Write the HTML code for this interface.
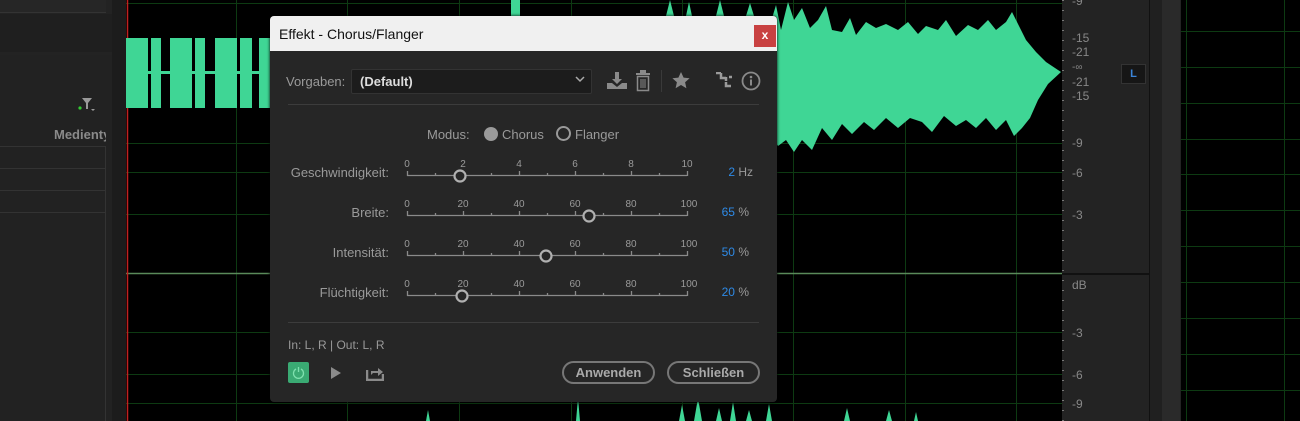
<!DOCTYPE html>
<html><head><meta charset="utf-8"><style>
*{margin:0;padding:0;box-sizing:border-box}
body{width:1300px;height:421px;overflow:hidden;background:#232323;font-family:"Liberation Sans",sans-serif;position:relative}
.a{position:absolute}
.t{color:#9a9a9a;font-size:13px}
</style></head><body>
<div class="a" style="left:0;top:0;width:106px;height:13px;background:#262626;border-bottom:1px solid #333"></div>
<div class="a" style="left:0;top:14px;width:112px;height:38px;background:#1f1f1f"></div>
<div class="a" style="left:0;top:55px;width:112px;height:366px;background:#222"></div>
<div class="a" style="left:0;top:146px;width:106px;height:1px;background:#333"></div>
<div class="a" style="left:0;top:168px;width:106px;height:1px;background:#333"></div>
<div class="a" style="left:0;top:190px;width:106px;height:1px;background:#333"></div>
<div class="a" style="left:0;top:212px;width:106px;height:1px;background:#333"></div>
<div class="a" style="left:105px;top:146px;width:1px;height:275px;background:#333"></div>
<div class="a" style="left:112px;top:0;width:14px;height:421px;background:#1c1c1c"></div>
<svg class="a" style="left:78px;top:96px" width="20" height="16"><circle cx="2" cy="12" r="1.6" fill="#3c3"/><path d="M4 2h10l-4 5v6h-2v-6z" fill="#999"/><path d="M13 13h4l-2 2z" fill="#999"/></svg>
<div class="a t" style="left:54px;top:127px;font-weight:bold;font-size:13px;color:#8a8a8a;width:52px;overflow:hidden;white-space:nowrap">Medientyp</div>
<svg class="a" style="left:126px;top:0" width="936" height="421">
<rect width="936" height="421" fill="#000"/>
<g stroke="#0d3a12" stroke-width="1">
<line x1="0" y1="3.5" x2="936" y2="3.5"/><line x1="0" y1="143.5" x2="936" y2="143.5"/><line x1="0" y1="172.5" x2="936" y2="172.5"/><line x1="0" y1="214.5" x2="936" y2="214.5"/><line x1="0" y1="332.5" x2="936" y2="332.5"/><line x1="0" y1="374.5" x2="936" y2="374.5"/><line x1="0" y1="403.5" x2="936" y2="403.5"/>
<line x1="110.5" y1="0" x2="110.5" y2="421"/><line x1="221.5" y1="0" x2="221.5" y2="421"/><line x1="333.5" y1="0" x2="333.5" y2="421"/><line x1="445.5" y1="0" x2="445.5" y2="421"/><line x1="556.5" y1="0" x2="556.5" y2="421"/><line x1="667.5" y1="0" x2="667.5" y2="421"/><line x1="779.5" y1="0" x2="779.5" y2="421"/><line x1="890.5" y1="0" x2="890.5" y2="421"/>
</g>
<line x1="0" y1="273.5" x2="936" y2="273.5" stroke="#5a8a5a" stroke-width="1.5"/>
<line x1="1.5" y1="0" x2="1.5" y2="421" stroke="#c02020" stroke-width="1.5"/>
<g fill="#3fd695">
<rect x="0" y="38" width="22" height="70"/><rect x="25" y="38" width="10" height="70"/><rect x="44" y="38" width="22" height="70"/><rect x="69" y="38" width="10" height="70"/><rect x="89" y="38" width="22" height="70"/><rect x="114" y="38" width="12" height="70"/><rect x="133" y="38" width="12" height="70"/>
<rect x="20" y="71" width="30" height="3"/><rect x="65" y="71" width="30" height="3"/><rect x="110" y="71" width="30" height="3"/>
<path d="M644 25 L650 5 L655 30 L662 2 L668 20 L676 8 L684 28 L692 20 L700 6 L706 30 L716 32 L724 18 L730 35 L740 22 L750 28 L760 24 L772 30 L782 22 L792 34 L800 26 L812 30 L820 20 L830 36 L842 25 L852 30 L862 20 L870 30 L880 22 L886 12 L892 24 L900 40 L910 52 L920 62 L935 72 L922 84 L912 100 L904 118 L896 128 L888 136 L880 120 L870 130 L860 118 L850 128 L840 120 L830 126 L818 116 L806 132 L796 122 L784 118 L772 128 L760 118 L748 130 L738 122 L726 134 L716 124 L706 140 L696 128 L686 150 L676 140 L668 152 L660 140 L652 146 L645 136 Z"/>
<path d="M540 16 L544 0 L548 16 L560 16 L563 2 L566 16 L590 16 L594 0 L598 16 L620 16 L624 3 L628 16 Z"/>
<rect x="385" y="0" width="9" height="16"/>
<path d="M553 421 L556 405 L559 421 L568 421 L572 398 L576 421 L590 421 L593 408 L596 421 L604 421 L607 402 L610 421 L620 421 L623 410 L626 421 L640 421 L643 404 L646 421 Z"/>
<path d="M718 421 L721 408 L724 421 L760 421 L763 410 L766 421 L788 421 L790 412 L792 421 Z"/>
<path d="M300 421 L302 410 L304 421 Z"/><path d="M450 421 L452 398 L454 421 Z"/>
</g>
</svg>
<div class="a" style="left:1062px;top:0;width:88px;height:421px;background:#232323"></div>
<div class="a" style="left:1062px;top:273px;width:88px;height:2px;background:#111"></div>
<div class="a" style="left:1062px;top:0;width:2px;height:421px;background:repeating-linear-gradient(#777 0 1px,transparent 1px 10px)"></div>
<div class="a" style="font-size:12px;color:#888;left:1072px;top:-6px;line-height:14px">-9</div>
<div class="a" style="font-size:12px;color:#888;left:1072px;top:31px;line-height:14px">-15<br>-21<br><span style="font-size:10px">-∞</span><br>-21<br>-15</div>
<div class="a" style="font-size:12px;color:#888;left:1072px;top:136px">-9</div>
<div class="a" style="font-size:12px;color:#888;left:1072px;top:166px">-6</div>
<div class="a" style="font-size:12px;color:#888;left:1072px;top:208px">-3</div>
<div class="a" style="font-size:12px;color:#888;left:1072px;top:278px">dB</div>
<div class="a" style="font-size:12px;color:#888;left:1072px;top:326px">-3</div>
<div class="a" style="font-size:12px;color:#888;left:1072px;top:368px">-6</div>
<div class="a" style="font-size:12px;color:#888;left:1072px;top:397px">-9</div>
<div class="a" style="left:1121px;top:64px;width:25px;height:20px;background:#161616;border:1px solid #333;color:#3a84d8;font-size:11px;font-weight:bold;text-align:center;line-height:18px">L</div>
<div class="a" style="left:1149px;top:0;width:1px;height:421px;background:#111"></div>
<div class="a" style="left:1150px;top:0;width:12px;height:421px;background:#202020"></div>
<div class="a" style="left:1162px;top:0;width:18px;height:421px;background:#2a2a2a"></div>
<svg class="a" style="left:1181px;top:0" width="119" height="421">
<rect width="119" height="421" fill="#000"/>
<g stroke="#0d3a12">
<line x1="5.5" y1="0" x2="5.5" y2="421"/><line x1="103.5" y1="0" x2="103.5" y2="421"/>
<line x1="0" y1="31.5" x2="119" y2="31.5"/><line x1="0" y1="67.5" x2="119" y2="67.5"/><line x1="0" y1="103.5" x2="119" y2="103.5"/><line x1="0" y1="139.5" x2="119" y2="139.5"/><line x1="0" y1="174.5" x2="119" y2="174.5"/><line x1="0" y1="210.5" x2="119" y2="210.5"/><line x1="0" y1="246.5" x2="119" y2="246.5"/><line x1="0" y1="282.5" x2="119" y2="282.5"/><line x1="0" y1="318.5" x2="119" y2="318.5"/><line x1="0" y1="354.5" x2="119" y2="354.5"/><line x1="0" y1="390.5" x2="119" y2="390.5"/>
</g></svg>
<div class="a" style="left:270px;top:16px;width:507px;height:386px;background:#262626;border-radius:4px;box-shadow:0 0 3px #000;overflow:hidden">
 <div class="a" style="left:0;top:0;width:507px;height:35px;background:#f0f0f0"></div>
 <div class="a" style="left:9px;top:10px;font-size:14px;color:#111">Effekt - Chorus/Flanger</div>
 <div class="a" style="left:484px;top:9px;width:22px;height:22px;background:#c84141;color:#fff;font-size:12px;font-weight:bold;text-align:center;line-height:21px">x</div>
 <div class="a t" style="left:16px;top:58px">Vorgaben:</div>
 <div class="a" style="left:81px;top:53px;width:241px;height:25px;background:#1c1c1c;border:1px solid #333;border-radius:2px;color:#ddd;font-size:13px;font-weight:bold;padding:4px 8px">(Default)</div>
 <svg class="a" style="left:305px;top:60px" width="10" height="8"><path d="M1 1l4 4 4-4" stroke="#aaa" stroke-width="1.5" fill="none"/></svg>
 <svg class="a" style="left:336px;top:55px" width="22" height="20"><path d="M9 1h4v7h3l-5 5-5-5h3z" fill="#8a8a8a"/><path d="M1 12h5l5 4 5-4h5v6H1z" fill="#8a8a8a"/></svg>
 <svg class="a" style="left:365px;top:54px" width="16" height="22"><rect x="1" y="3" width="14" height="2" fill="#8a8a8a"/><rect x="5" y="0" width="6" height="3" fill="#8a8a8a"/><rect x="2.5" y="6.5" width="11" height="14" fill="none" stroke="#8a8a8a" stroke-width="1.5"/><path d="M6 9v9M8 9v9M10 9v9" stroke="#8a8a8a"/></svg>
 <div class="a" style="left:391px;top:54px;width:1px;height:22px;background:#3a3a3a"></div>
 <svg class="a" style="left:402px;top:56px" width="18" height="17"><path d="M9 0l2.6 5.6 6 .6-4.5 4 1.3 6L9 13l-5.4 3.2 1.3-6L.4 6.2l6-.6z" fill="#8a8a8a"/></svg>
 <svg class="a" style="left:446px;top:56px" width="16" height="17"><path d="M0 1h5M5 1v5h5M10 5v4M10 10v4h5M13 5h3" stroke="#9a9a9a" stroke-width="2.5" fill="none"/></svg>
 <svg class="a" style="left:471px;top:55px" width="20" height="20"><circle cx="10" cy="10" r="8.5" stroke="#8a8a8a" stroke-width="1.8" fill="none"/><circle cx="10" cy="6" r="1.3" fill="#8a8a8a"/><rect x="9" y="8.5" width="2" height="6" fill="#8a8a8a"/></svg>
 <div class="a" style="left:18px;top:88px;width:471px;height:1px;background:#3c3c3c"></div>
 <div class="a t" style="left:157px;top:111px">Modus:</div>
 <div class="a" style="left:214px;top:111px;width:14px;height:14px;border-radius:50%;background:#9a9a9a"></div>
 <div class="a t" style="left:232px;top:111px">Chorus</div>
 <div class="a" style="left:286px;top:110px;width:15px;height:15px;border-radius:50%;border:2px solid #9a9a9a"></div>
 <div class="a t" style="left:305px;top:111px">Flanger</div>
 <div class="a" style="left:18px;top:306px;width:471px;height:1px;background:#3c3c3c"></div>
 <div class="a t" style="left:18px;top:322px;font-size:12px;color:#999">In: L, R | Out: L, R</div>
 <div class="a" style="left:18px;top:346px;width:21px;height:21px;background:#3aaa73;border-radius:2px"></div>
 <svg class="a" style="left:22px;top:350px" width="13" height="13"><path d="M4 3a5 5 0 1 0 5 0" stroke="#7fe0ae" stroke-width="1.3" fill="none"/><path d="M6.5 1v5" stroke="#7fe0ae" stroke-width="1.3"/></svg>
 <svg class="a" style="left:60px;top:351px" width="12" height="12"><path d="M1 0l10 6-10 6z" fill="#8a8a8a"/></svg>
 <svg class="a" style="left:96px;top:349px" width="18" height="16"><path d="M1 5v10h16V9" stroke="#8a8a8a" stroke-width="2.5" fill="none"/><path d="M5 10l0-4h7V3l5 4-5 4V8H7z" fill="#8a8a8a"/></svg>
 <div class="a" style="left:292px;top:345px;width:93px;height:23px;border:2px solid #777;border-radius:12px;color:#aaa;font-size:13px;font-weight:bold;text-align:center;line-height:19px">Anwenden</div>
 <div class="a" style="left:397px;top:345px;width:93px;height:23px;border:2px solid #777;border-radius:12px;color:#aaa;font-size:13px;font-weight:bold;text-align:center;line-height:19px">Schließen</div>
</div>
<svg class="a" style="left:270px;top:150px" width="507" height="160" font-family="Liberation Sans,sans-serif">
<g fill="#9a9a9a" font-size="13" text-anchor="end">
<text x="119" y="27">Geschwindigkeit:</text><text x="119" y="67">Breite:</text><text x="119" y="107">Intensität:</text><text x="119" y="147">Flüchtigkeit:</text>
</g>
<g font-size="10" fill="#9a9a9a" text-anchor="middle">
<text x="137" y="17">0</text><text x="193" y="17">2</text><text x="249" y="17">4</text><text x="305" y="17">6</text><text x="361" y="17">8</text><text x="417" y="17">10</text>
<text x="137" y="57">0</text><text x="193" y="57">20</text><text x="249" y="57">40</text><text x="305" y="57">60</text><text x="361" y="57">80</text><text x="419" y="57">100</text>
<text x="137" y="97">0</text><text x="193" y="97">20</text><text x="249" y="97">40</text><text x="305" y="97">60</text><text x="361" y="97">80</text><text x="419" y="97">100</text>
<text x="137" y="137">0</text><text x="193" y="137">20</text><text x="249" y="137">40</text><text x="305" y="137">60</text><text x="361" y="137">80</text><text x="419" y="137">100</text>
</g>
<g stroke="#8a8a8a" stroke-width="1.3">
<path d="M137 25.5H417M137 65.5H417M137 105.5H417M137 145.5H417"/>
<path d="M137.5 21v5M193.5 21v5M249.5 21v5M305.5 21v5M361.5 21v5M417.5 21v5M165.5 23v3M221.5 23v3M277.5 23v3M333.5 23v3M389.5 23v3"/>
<path d="M137.5 61v5M193.5 61v5M249.5 61v5M305.5 61v5M361.5 61v5M417.5 61v5M165.5 63v3M221.5 63v3M277.5 63v3M333.5 63v3M389.5 63v3"/>
<path d="M137.5 101v5M193.5 101v5M249.5 101v5M305.5 101v5M361.5 101v5M417.5 101v5M165.5 103v3M221.5 103v3M277.5 103v3M333.5 103v3M389.5 103v3"/>
<path d="M137.5 141v5M193.5 141v5M249.5 141v5M305.5 141v5M361.5 141v5M417.5 141v5M165.5 143v3M221.5 143v3M277.5 143v3M333.5 143v3M389.5 143v3"/>
</g>
<g fill="#262626" stroke="#b0b0b0" stroke-width="2.2">
<circle cx="190" cy="26" r="5.5"/><circle cx="319" cy="66" r="5.5"/><circle cx="276" cy="106" r="5.5"/><circle cx="192" cy="146" r="5.5"/>
</g>
<g font-size="12" text-anchor="end"><text x="483" y="26" fill="#9a9a9a"><tspan fill="#2e8ae6">2</tspan> Hz</text>
<text x="479" y="66" fill="#9a9a9a"><tspan fill="#2e8ae6">65</tspan> %</text>
<text x="479" y="106" fill="#9a9a9a"><tspan fill="#2e8ae6">50</tspan> %</text>
<text x="479" y="146" fill="#9a9a9a"><tspan fill="#2e8ae6">20</tspan> %</text></g>
</svg>
</body></html>
